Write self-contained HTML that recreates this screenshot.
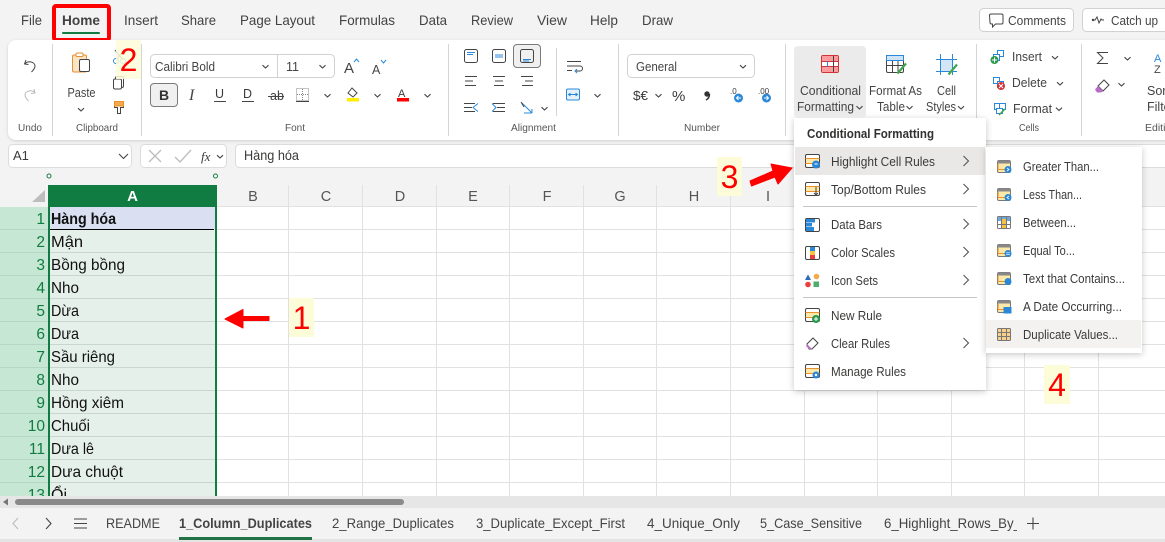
<!DOCTYPE html>
<html><head><meta charset="utf-8"><title>Excel</title>
<style>
html,body{margin:0;padding:0;background:#f3f3f3;overflow:hidden;width:1165px;height:542px}
svg{display:block}
text{font-family:"Liberation Sans","Noto Sans CJK SC",sans-serif;font-size:12px;fill:#3b3a39}
.tab{font-size:14px;fill:#424242}
.lb{font-size:10.5px;fill:#555}
.rb{font-size:12.5px;fill:#444}
.m{font-size:12.5px;fill:#3b3a39}
.c{font-size:16px;fill:#111}
.r{font-size:15.5px;fill:#107c41;text-anchor:end}
.h{font-size:14.5px;fill:#555;text-anchor:middle}
.s{font-size:14px;fill:#444}
.n{font-size:32px;fill:#ff0000;text-anchor:middle}
.ch{fill:none;stroke:#444;stroke-width:1.1}
.ln{stroke:#444;stroke-width:1;fill:none}
.bl{stroke:#2b88d8;stroke-width:1;fill:none}
</style></head><body>
<svg width="1165" height="542" viewBox="0 0 1165 542" xmlns="http://www.w3.org/2000/svg">
<defs>
<filter id="sh" x="-10%" y="-10%" width="120%" height="120%"><feDropShadow dx="0" dy="1.5" stdDeviation="3.5" flood-color="#000" flood-opacity=".22"/></filter>
<filter id="sr" x="-2%" y="-10%" width="104%" height="120%"><feDropShadow dx="0" dy="1" stdDeviation="1.5" flood-color="#000" flood-opacity=".15"/></filter>
<path id="dn" d="M-3-1.300 0 1.500 3-1.300" fill="none" stroke="#444" stroke-width="1.1"/>
<path id="rt" d="M-2.500-5 2.500 0-2.500 5" fill="none" stroke="#555" stroke-width="1.1"/>
<g id="ri">
 <rect x=".5" y=".5" width="14" height="13" rx="1.500" fill="#fff" stroke="#444"/>
 <rect x="1" y="4" width="13" height="6" fill="#fce9a9"/>
 <path d="M.5 4.500h14M.5 9.500h14" stroke="#e8912d" fill="none"/>
</g>
<g id="si">
 <rect x=".5" y=".5" width="13" height="12" rx="1.500" fill="#fce9a9" stroke="#777"/>
 <rect x=".5" y=".5" width="13" height="3" fill="#888"/>
 <path d="M.5 9.500h13" stroke="#e8912d"/>
 <path d="M1 4v5" stroke="#e8912d"/>
</g>
</defs>

<!-- base -->
<rect width="1165" height="542" fill="#f3f3f3"/>

<!-- sheet -->
<rect x="0" y="185" width="1165" height="312" fill="#fff"/>
<rect x="0" y="185" width="48" height="22" fill="#f3f3f3"/>
<rect x="217" y="185" width="948" height="22" fill="#f3f3f3"/>
<path d="M45 190V202H32Z" fill="#bdbdbd"/>
<rect x="0" y="207" width="48" height="290" fill="#c6e7d4"/>
<rect x="48" y="207" width="169" height="290" fill="#e6f0ea"/>
<rect x="50" y="207" width="165" height="22" fill="#dae0f2"/>
<g stroke="#e1e1e1" stroke-width="1">
<path d="M217 206.500H1165M217 229.500H1165M217 252.500H1165M217 275.500H1165M217 298.500H1165M217 321.500H1165M217 344.500H1165M217 367.500H1165M217 390.500H1165M217 413.500H1165M217 436.500H1165M217 459.500H1165M217 482.500H1165"/>
<path d="M288.500 185V497M362.500 185V497M436.500 185V497M509.500 185V497M583.500 185V497M656.500 185V497M730.500 185V497M804.500 185V497M877.500 185V497M951.500 185V497M1024.500 185V497M1098.500 185V497"/>
</g>
<g stroke="#c9d6ce" stroke-width="1">
<path d="M50 252.500H215M50 275.500H215M50 298.500H215M50 321.500H215M50 344.500H215M50 367.500H215M50 390.500H215M50 413.500H215M50 436.500H215M50 459.500H215M50 482.500H215"/>
</g>
<g stroke="#b4d6c2" stroke-width="1">
<path d="M0 229.500H48M0 252.500H48M0 275.500H48M0 298.500H48M0 321.500H48M0 344.500H48M0 367.500H48M0 390.500H48M0 413.500H48M0 436.500H48M0 459.500H48M0 482.500H48"/>
</g>
<path d="M50 229.500H214" stroke="#000" stroke-width="1"/>
<rect x="48" y="185" width="169" height="22" fill="#107c41"/>
<rect x="48" y="207" width="2" height="290" fill="#107c41"/>
<rect x="215" y="207" width="2" height="290" fill="#107c41"/>
<circle cx="49" cy="176" r="2" fill="#fff" stroke="#107c41"/>
<circle cx="215.500" cy="176" r="2" fill="#fff" stroke="#107c41"/>
<text x="132.500" y="201" style="font-size:15px;font-weight:bold;fill:#fff;text-anchor:middle">A</text>
<text class="h" x="253" y="201">B</text>
<text class="h" x="326" y="201">C</text>
<text class="h" x="400" y="201">D</text>
<text class="h" x="473" y="201">E</text>
<text class="h" x="547" y="201">F</text>
<text class="h" x="620" y="201">G</text>
<text class="h" x="694" y="201">H</text>
<text class="h" x="768" y="201">I</text>

<g>
<text class="r" x="45" y="224">1</text><text class="r" x="45" y="247">2</text><text class="r" x="45" y="270">3</text><text class="r" x="45" y="293">4</text><text class="r" x="45" y="316">5</text><text class="r" x="45" y="339">6</text><text class="r" x="45" y="362">7</text><text class="r" x="45" y="385">8</text><text class="r" x="45" y="408">9</text><text class="r" x="45" y="431">10</text><text class="r" x="45" y="454">11</text><text class="r" x="45" y="477">12</text>
<text class="c" x="51" y="224" textLength="65" lengthAdjust="spacingAndGlyphs" style="font-weight:bold">Hàng hóa</text>
<text class="c" x="51" y="247" textLength="32" lengthAdjust="spacingAndGlyphs">Mận</text>
<text class="c" x="51" y="270" textLength="74" lengthAdjust="spacingAndGlyphs">Bồng bồng</text>
<text class="c" x="51" y="293" textLength="28" lengthAdjust="spacingAndGlyphs">Nho</text>
<text class="c" x="51" y="316" textLength="28" lengthAdjust="spacingAndGlyphs">Dừa</text>
<text class="c" x="51" y="339" textLength="28" lengthAdjust="spacingAndGlyphs">Dưa</text>
<text class="c" x="51" y="362" textLength="64" lengthAdjust="spacingAndGlyphs">Sầu riêng</text>
<text class="c" x="51" y="385" textLength="28" lengthAdjust="spacingAndGlyphs">Nho</text>
<text class="c" x="51" y="408" textLength="73" lengthAdjust="spacingAndGlyphs">Hồng xiêm</text>
<text class="c" x="51" y="431" textLength="39" lengthAdjust="spacingAndGlyphs">Chuối</text>
<text class="c" x="51" y="454" textLength="43" lengthAdjust="spacingAndGlyphs">Dưa lê</text>
<text class="c" x="51" y="477" textLength="72" lengthAdjust="spacingAndGlyphs">Dưa chuột</text>
<text class="r" x="45" y="500">13</text>
<text class="c" x="51" y="500">Ổi</text>
</g>

<!-- scrollbar + tabs -->
<rect x="0" y="496" width="1165" height="12" fill="#e6e6e6"/>
<rect x="15" y="499" width="389" height="6" rx="3" fill="#8a8a8a"/>
<path d="M3 502 8 498.500V505.500Z" fill="#777"/>
<rect x="0" y="508" width="1165" height="31" fill="#f3f3f3"/>
<rect x="0" y="539" width="1165" height="3" fill="#e4e4e4"/>
<path d="M18 518 13 523.500 18 529" fill="none" stroke="#bbb" stroke-width="1.100"/>
<path d="M46 518 51 523.500 46 529" fill="none" stroke="#444" stroke-width="1.100"/>
<path d="M74 519H87M74 523.500H87M74 528H87" stroke="#444" stroke-width="1.100"/>
<text class="s" x="106" y="528" textLength="54" lengthAdjust="spacingAndGlyphs">README</text>
<text class="s" x="179" y="528" textLength="133" lengthAdjust="spacingAndGlyphs" style="font-weight:bold">1_Column_Duplicates</text>
<rect x="179" y="537" width="133" height="3" fill="#217346"/>
<text class="s" x="332" y="528" textLength="122" lengthAdjust="spacingAndGlyphs">2_Range_Duplicates</text>
<text class="s" x="476" y="528" textLength="149" lengthAdjust="spacingAndGlyphs">3_Duplicate_Except_First</text>
<text class="s" x="647" y="528" textLength="93" lengthAdjust="spacingAndGlyphs">4_Unique_Only</text>
<text class="s" x="760" y="528" textLength="102" lengthAdjust="spacingAndGlyphs">5_Case_Sensitive</text>
<text class="s" x="884" y="528" textLength="137" lengthAdjust="spacingAndGlyphs">6_Highlight_Rows_By_</text>
<rect x="1017" y="508" width="148" height="31" fill="#f3f3f3"/>
<path d="M1027 523.500H1039M1033 517.500V529.500" stroke="#444" stroke-width="1.100"/>

<!-- top tabs -->
<text class="tab" x="21" y="25" textLength="21" lengthAdjust="spacingAndGlyphs">File</text>
<text class="tab" x="62" y="25" textLength="38" lengthAdjust="spacingAndGlyphs" style="font-weight:bold">Home</text>
<rect x="62" y="32" width="38" height="2" rx="1" fill="#107c41"/>
<rect x="54" y="6" width="55" height="34" rx="2" fill="none" stroke="#ff0000" stroke-width="4"/>
<text class="tab" x="124" y="25" textLength="34" lengthAdjust="spacingAndGlyphs">Insert</text>
<text class="tab" x="181" y="25" textLength="35" lengthAdjust="spacingAndGlyphs">Share</text>
<text class="tab" x="240" y="25" textLength="75" lengthAdjust="spacingAndGlyphs">Page Layout</text>
<text class="tab" x="339" y="25" textLength="56" lengthAdjust="spacingAndGlyphs">Formulas</text>
<text class="tab" x="419" y="25" textLength="28" lengthAdjust="spacingAndGlyphs">Data</text>
<text class="tab" x="471" y="25" textLength="42" lengthAdjust="spacingAndGlyphs">Review</text>
<text class="tab" x="537" y="25" textLength="30" lengthAdjust="spacingAndGlyphs">View</text>
<text class="tab" x="590" y="25" textLength="28" lengthAdjust="spacingAndGlyphs">Help</text>
<text class="tab" x="642" y="25" textLength="31" lengthAdjust="spacingAndGlyphs">Draw</text>

<rect x="979.500" y="8.500" width="94" height="23" rx="4" fill="#fff" stroke="#d1d1d1"/>
<path d="M989.500 15.500a1.500 1.500 0 0 1 1.500-1.500h10.500a1.500 1.500 0 0 1 1.500 1.500v7a1.500 1.500 0 0 1-1.500 1.500h-6l-3 3v-3h-1a1.500 1.500 0 0 1-1.500-1.500z" class="ln"/>
<text x="1008" y="25" textLength="58" lengthAdjust="spacingAndGlyphs" class="rb">Comments</text>
<rect x="1082.500" y="8.500" width="90" height="23" rx="4" fill="#fff" stroke="#d1d1d1"/>
<path d="M1092 20h3l2-3 2 6 2-4 1 1h2" class="ln"/><circle cx="1093" cy="20" r="1.200" fill="#444"/>
<text x="1111" y="25" textLength="47" lengthAdjust="spacingAndGlyphs" class="rb">Catch up</text>

<!-- ribbon -->
<rect x="8" y="40" width="1170" height="100" rx="8" fill="#fff" filter="url(#sr)"/>
<g stroke="#d4d4d4" stroke-width="1">
<path d="M52.500 44V136M141.500 44V136M448.500 44V136M618.500 44V136M785.500 44V136M976.500 44V136M1081.500 44V136"/>
</g>
<text class="lb" x="18" y="131" textLength="24" lengthAdjust="spacingAndGlyphs">Undo</text>
<text class="lb" x="76" y="131" textLength="42" lengthAdjust="spacingAndGlyphs">Clipboard</text>
<text class="lb" x="285" y="131" textLength="20" lengthAdjust="spacingAndGlyphs">Font</text>
<text class="lb" x="511" y="131" textLength="45" lengthAdjust="spacingAndGlyphs">Alignment</text>
<text class="lb" x="684" y="131" textLength="36" lengthAdjust="spacingAndGlyphs">Number</text>
<text class="lb" x="1019" y="131" textLength="20" lengthAdjust="spacingAndGlyphs">Cells</text>
<text class="lb" x="1145" y="131">Editing</text>

<!-- undo redo -->
<path d="M26 60 l-1.500 4 4 .5 M25 64c3-4 10-2 10 2 0 2-1.500 4-3.500 6" class="ln"/>
<path d="M34 89l1 4-4 .5M35 93c-3-4-10-2-10 2 0 2 1.500 4 3.500 6" fill="none" stroke="#bbb"/>
<!-- clipboard -->
<rect x="72.500" y="55" width="14" height="17" rx="1.500" fill="#fbe3c6" stroke="#e8912d"/>
<rect x="76" y="53" width="7" height="3.500" rx="1" fill="#fff" stroke="#e8912d"/>
<rect x="79.500" y="59.500" width="10" height="12" rx="1.500" fill="#fff" stroke="#444"/>
<text class="rb" x="67.500" y="97" textLength="28" lengthAdjust="spacingAndGlyphs">Paste</text>
<use href="#dn" x="81" y="109.500"/>
<path d="M115 50 123 60M124 50 117 59" class="ln"/><circle cx="116" cy="61" r="2.500" fill="none" stroke="#2b88d8"/><circle cx="123" cy="61" r="2.500" fill="none" stroke="#2b88d8"/>
<rect x="115.500" y="76.500" width="8" height="11" rx="1.500" fill="#fff" stroke="#444"/><rect x="113.500" y="79" width="8" height="10" rx="1.500" fill="#fff" stroke="#444"/>
<path d="M114.500 101.500h9v6h-3v6h-3v-6h-3z" fill="#fff" stroke="#444"/><rect x="114.500" y="101.500" width="9" height="4.500" fill="#f5a94a" stroke="#e8912d"/>

<!-- font -->
<rect x="150.500" y="54.500" width="184" height="23" rx="4" fill="#fff" stroke="#d1d1d1"/>
<path d="M277.500 55V77" stroke="#d1d1d1"/>
<text class="rb" x="155" y="71" textLength="60" lengthAdjust="spacingAndGlyphs">Calibri Bold</text>
<use href="#dn" x="265.500" y="66.500"/>
<text class="rb" x="286" y="71" textLength="13">11</text>
<use href="#dn" x="322.500" y="66.500"/>
<text x="344" y="73" style="font-size:15px;fill:#444">A</text><path d="M354 62l2.500-3 2.500 3" class="bl"/>
<text x="372" y="74" style="font-size:12.500px;fill:#444">A</text><path d="M381 60l2.500 3 2.500-3" class="bl"/>
<rect x="150.500" y="83.500" width="27" height="23" rx="3.500" fill="#f0f0f0" stroke="#7a7a7a"/>
<text x="159" y="100" style="font-size:14px;font-weight:bold;fill:#333">B</text>
<text x="189" y="100" style="font-size:16px;font-style:italic;font-family:'Liberation Serif',serif;fill:#444">I</text>
<text x="215" y="98" style="font-size:12.500px">U</text><path d="M214 101.500H226" class="ln"/>
<text x="243" y="98" style="font-size:12.500px">D</text><path d="M242 101.500H254" class="ln"/>
<text x="270" y="100" style="font-size:12.500px">ab</text><path d="M268 96.500H284" class="ln"/>
<rect x="296.500" y="88.500" width="12" height="12" fill="none" stroke="#888" stroke-dasharray="1 1"/><path d="M302.500 89V100M297 94.500H308" stroke="#888" stroke-dasharray="1 1"/><path d="M296 101.500H309" class="ln"/>
<use href="#dn" x="327.500" y="95.500"/>
<path d="M348 93l4-5 5 5-4 4z" fill="#fff" stroke="#444"/><rect x="347" y="98" width="12" height="3.500" fill="#ffee00"/>
<use href="#dn" x="377.500" y="95.500"/>
<text x="398" y="97" style="font-size:11px">A</text><rect x="397" y="98" width="12" height="3.500" fill="#ff0000"/>
<use href="#dn" x="427.500" y="95.500"/>

<!-- alignment -->
<rect x="513.500" y="44.500" width="27" height="23" rx="3.500" fill="#f0f0f0" stroke="#7a7a7a"/>
<g fill="none" stroke="#444">
<rect x="464.500" y="49.500" width="13" height="13" rx="2"/><rect x="492.500" y="49.500" width="13" height="13" rx="2"/><rect x="520.500" y="49.500" width="13" height="13" rx="2"/>
</g>
<path d="M467 52.500H475M467 54.500H473M495 55H503M495 57H503M523 59.500H531M523 61H529" class="bl"/>
<path d="M465 76.500H477M465 81H473M465 85.500H476M493 76.500H505M495 81H503M494 85.500H504M521 76.500H533M525 81H533M522 85.500H533" class="ln"/>
<path d="M464 103.500H475M464 107.500H472M464 111.500H475M493 103.500H505M497 107.500H505M493 111.500H505" class="ln"/>
<path d="M478 103.500 473 107.500 478 111.500M492 103.500 496 107.500 492 111.500" class="bl"/>
<path d="M522 103l10 10M532 113v-4M532 113h-4M524 113h8" class="bl"/><path d="M521 102l3 5" class="ln"/>
<use href="#dn" x="544.500" y="108.500"/>
<path d="M556.500 48V116" stroke="#d4d4d4"/>
<path d="M567 61.500H581M567 66H580a2.500 2.500 0 0 1 0 5h-4M567 70.500H572" class="ln"/><path d="M577 69l-2 2 2 2" class="bl"/>
<rect x="566.500" y="89" width="13" height="11" rx="1.500" fill="#e5f1fb" stroke="#2b88d8"/><path d="M569 94.500H577M570.500 93l-2 1.500 2 1.500M575.500 93l2 1.500-2 1.500" class="bl"/>
<use href="#dn" x="597.500" y="95.500"/>

<!-- number -->
<rect x="627.500" y="54.500" width="127" height="23" rx="4" fill="#fff" stroke="#d1d1d1"/>
<text class="rb" x="636" y="71" textLength="41" lengthAdjust="spacingAndGlyphs">General</text>
<use href="#dn" x="743" y="66.500"/>
<text x="633" y="100" style="font-size:12.500px" textLength="15" lengthAdjust="spacingAndGlyphs">$€</text>
<use href="#dn" x="658.500" y="95.500"/>
<text x="672" y="101" style="font-size:15px">%</text>
<circle cx="707" cy="94" r="2.700" fill="#333"/><path d="M709.500 94c0 3-1.500 5-3.500 6" stroke="#333" stroke-width="1.500" fill="none"/>
<circle cx="738.500" cy="98" r="4.500" fill="#2b88d8"/><path d="M741 98H736.500M738.500 96l-2 2 2 2" stroke="#fff" fill="none"/><text x="730" y="94" style="font-size:8px">.0</text>
<circle cx="766.500" cy="98" r="4.500" fill="#2b88d8"/><path d="M764 98H768.500M766.500 96l2 2-2 2" stroke="#fff" fill="none"/><text x="758" y="94" style="font-size:8px">.00</text>

<!-- styles -->
<rect x="821.500" y="55.500" width="17" height="17" rx="1.500" fill="#fff" stroke="#d13438"/>
<text class="rb" x="869" y="95" textLength="53" lengthAdjust="spacingAndGlyphs">Format As</text>
<text class="rb" x="877" y="111" textLength="28" lengthAdjust="spacingAndGlyphs">Table</text>
<use href="#dn" x="909.500" y="107.500"/>
<rect x="886.500" y="55.500" width="17" height="17" rx="1.500" fill="#fff" stroke="#444"/>
<rect x="886.500" y="55.500" width="17" height="5" fill="#cfe4f7" stroke="#2b88d8"/>
<path d="M887 65.500H903M892.500 61V72M898 61V72" stroke="#444"/>
<path d="M897.500 73.500 906 63.500" stroke="#3fa64d" stroke-width="2.200" fill="none"/>
<rect x="940" y="59" width="13" height="13" fill="#d2e6f7"/>
<path d="M940.500 54V75M952.500 54V75M936 59.500H957M936 71.500H957" stroke="#2b88d8"/>
<path d="M948.500 74.500 957 64.500" stroke="#3fa64d" stroke-width="2.200" fill="none"/>
<text class="rb" x="937" y="95" textLength="19" lengthAdjust="spacingAndGlyphs">Cell</text>
<text class="rb" x="926" y="111" textLength="30" lengthAdjust="spacingAndGlyphs">Styles</text>
<use href="#dn" x="961" y="107.500"/>

<!-- cells -->
<rect x="997.500" y="50.500" width="6" height="6" fill="#fff" stroke="#2b88d8"/><rect x="993.500" y="54.500" width="6" height="6" fill="#fff" stroke="#2b88d8"/>
<circle cx="994.500" cy="60" r="4" fill="#2b9a4e"/><path d="M992 60H997M994.500 57.500V62.500" stroke="#fff"/>
<text class="rb" x="1012" y="61" textLength="30" lengthAdjust="spacingAndGlyphs">Insert</text>
<use href="#dn" x="1055" y="57.500"/>
<rect x="993.500" y="77.500" width="6" height="6" fill="#fff" stroke="#2b88d8"/><rect x="997.500" y="81.500" width="6" height="6" fill="#fff" stroke="#2b88d8"/>
<circle cx="1001" cy="86" r="4" fill="#d13438"/><path d="M999 84 1003 88M1003 84 999 88" stroke="#fff"/>
<text class="rb" x="1012" y="87" textLength="35" lengthAdjust="spacingAndGlyphs">Delete</text>
<use href="#dn" x="1060" y="83.500"/>
<rect x="994.500" y="103.500" width="6" height="6" fill="#fff" stroke="#2b88d8"/><rect x="999.500" y="103.500" width="6" height="6" fill="#fff" stroke="#2b88d8"/><rect x="996.500" y="108.500" width="6" height="5" fill="#fff" stroke="#2b88d8"/>
<path d="M999 115l2-2 4-4" stroke="#3fa64d" stroke-width="1.500" fill="none"/>
<text class="rb" x="1013" y="113" textLength="39" lengthAdjust="spacingAndGlyphs">Format</text>
<use href="#dn" x="1059" y="109"/>
<path d="M1108 52.500H1097.500L1103 58 1097.500 63.500H1108" class="ln"/>
<use href="#dn" x="1127.500" y="58.500"/>
<path d="M1098 86l6-6 5 5-6 6z" fill="#fff" stroke="#444"/><path d="M1098 86l5 5-2 1.500h-4l-2-3z" fill="#b86bc9"/>
<use href="#dn" x="1121.500" y="84.500"/>
<text x="1154" y="62" style="font-size:11px;fill:#2b88d8">A</text>
<text x="1154" y="73" style="font-size:11px;fill:#444">Z</text>
<text class="rb" x="1147" y="95">Sort &amp;</text>
<text class="rb" x="1147" y="111">Filter</text>

<!-- formula bar -->
<rect x="8.500" y="144.500" width="123" height="23" rx="4" fill="#fff" stroke="#dcdcdc"/>
<text x="13" y="160" style="font-size:13px">A1</text>
<path d="M119 154 123.500 158.500 128 154" class="ch"/>
<rect x="140.500" y="144.500" width="86" height="23" rx="4" fill="#fff" stroke="#dcdcdc"/>
<path d="M149 150 161 162M161 150 149 162" stroke="#bdbdbd" stroke-width="1.300"/>
<path d="M175 157 180 162 191 150" stroke="#bdbdbd" stroke-width="1.300" fill="none"/>
<text x="201" y="161" style="font-size:13px;font-style:italic;font-family:'Liberation Serif',serif">fx</text>
<use href="#dn" x="220" y="156.500"/>
<rect x="235.500" y="144.500" width="940" height="23" rx="4" fill="#fff" stroke="#dcdcdc"/>
<text x="244" y="160" style="font-size:13.500px" textLength="55" lengthAdjust="spacingAndGlyphs">Hàng hóa</text>

<!-- main menu -->
<rect x="794" y="118" width="192" height="272" fill="#fff" filter="url(#sh)"/>
<rect x="794" y="46" width="72" height="72" rx="4" fill="#ebebeb"/>
<rect x="821.500" y="55.500" width="17" height="17" rx="1.500" fill="#fff" stroke="#d13438"/>
<rect x="822" y="56" width="16" height="5" fill="#ff9a9a"/><rect x="822" y="67" width="16" height="5" fill="#ff9a9a"/>
<path d="M821.500 61.500H838.500M821.500 66.500H838.500" stroke="#d13438"/>
<path d="M827.500 61V67" stroke="#2b88d8"/><path d="M833.500 56V72" stroke="#444"/>
<text class="rb" x="800" y="95" textLength="61" lengthAdjust="spacingAndGlyphs">Conditional</text>
<text class="rb" x="797" y="111" textLength="57" lengthAdjust="spacingAndGlyphs">Formatting</text>
<use href="#dn" x="859.500" y="107.500"/>
<text x="807" y="138" textLength="127" lengthAdjust="spacingAndGlyphs" style="font-size:12.500px;font-weight:bold;fill:#323130">Conditional Formatting</text>
<rect x="795" y="147" width="190" height="28" fill="#eae8e6"/>

<use href="#ri" x="805" y="154"/><circle cx="816" cy="164.500" r="4" fill="#2b88d8"/><path d="M814.500 164H817.500" stroke="#fff"/>
<text class="m" x="831" y="166" textLength="104" lengthAdjust="spacingAndGlyphs">Highlight Cell Rules</text><use href="#rt" x="966" y="161"/>
<use href="#ri" x="805" y="182"/><path d="M816 187V195M814 193l2 2 2-2" class="ln"/>
<text class="m" x="831" y="194" textLength="95" lengthAdjust="spacingAndGlyphs">Top/Bottom Rules</text><use href="#rt" x="966" y="189"/>
<path d="M803 206.500H977" stroke="#c8c6c4"/>
<rect x="805.500" y="218.500" width="14" height="13" rx="1.500" fill="#fff" stroke="#444"/><rect x="806" y="219" width="9" height="3.500" fill="#2b88d8"/><rect x="806" y="223" width="6" height="3.500" fill="#2b88d8"/><rect x="806" y="227" width="8" height="4" fill="#2b88d8"/>
<text class="m" x="831" y="229" textLength="51" lengthAdjust="spacingAndGlyphs">Data Bars</text><use href="#rt" x="966" y="224"/>
<rect x="805.500" y="246.500" width="14" height="13" rx="1.500" fill="#fff" stroke="#444"/><rect x="810" y="247" width="5" height="4" fill="#2b88d8"/><rect x="810" y="251" width="5" height="4" fill="#f5c242"/><rect x="810" y="255" width="5" height="4" fill="#e8403a"/>
<text class="m" x="831" y="257" textLength="64" lengthAdjust="spacingAndGlyphs">Color Scales</text><use href="#rt" x="966" y="252"/>
<path d="M805 280l3-5.500 3 5.500z" fill="#2b6cb8"/><circle cx="816.500" cy="276.500" r="2.800" fill="#f5a94a"/><circle cx="808" cy="284.500" r="2.800" fill="#e8403a"/><rect x="813.500" y="281.500" width="5.500" height="5.500" fill="#4caf6a"/>
<text class="m" x="831" y="285" textLength="47" lengthAdjust="spacingAndGlyphs">Icon Sets</text><use href="#rt" x="966" y="280"/>
<path d="M803 297.500H977" stroke="#c8c6c4"/>
<use href="#ri" x="805" y="308"/><circle cx="816" cy="319" r="4" fill="#2b9a4e"/><path d="M814 319H818M816 317V321" stroke="#fff"/>
<text class="m" x="831" y="320" textLength="51" lengthAdjust="spacingAndGlyphs">New Rule</text>
<path d="M807 344l6-6 5 5-6 6h-3z" fill="#fff" stroke="#444"/><path d="M807 344l5 5h-3l-3-3z" fill="#b86bc9"/>
<text class="m" x="831" y="348" textLength="59" lengthAdjust="spacingAndGlyphs">Clear Rules</text><use href="#rt" x="966" y="343"/>
<use href="#ri" x="805" y="364"/><circle cx="816" cy="375" r="3.500" fill="#2b88d8"/><circle cx="816" cy="375" r="1.200" fill="#fff"/>
<text class="m" x="831" y="376" textLength="75" lengthAdjust="spacingAndGlyphs">Manage Rules</text>

<!-- submenu -->
<rect x="986" y="147" width="156" height="206" fill="#fff" filter="url(#sh)"/>
<rect x="986" y="320" width="155" height="28" fill="#f3f2f1"/>
<use href="#si" x="997" y="160"/><circle cx="1008" cy="169.500" r="3.500" fill="#2b88d8"/><path d="M1007 168l2 1.500-2 1.500" stroke="#fff" fill="none" stroke-width=".8"/>
<text class="m" x="1023" y="171" textLength="76" lengthAdjust="spacingAndGlyphs">Greater Than...</text>
<use href="#si" x="997" y="188"/><circle cx="1008" cy="197.500" r="3.500" fill="#2b88d8"/><path d="M1009 196l-2 1.500 2 1.500" stroke="#fff" fill="none" stroke-width=".8"/>
<text class="m" x="1023" y="199" textLength="59" lengthAdjust="spacingAndGlyphs">Less Than...</text>
<rect x="997.500" y="216.500" width="13" height="12" rx="1" fill="#fff" stroke="#777"/><rect x="998" y="217" width="12" height="4" fill="#6fa8dc"/><rect x="1002" y="219" width="4" height="9" fill="#f5c242"/><path d="M1001.500 217V228M1006.500 217V228M998 224.500H1010" stroke="#777"/>
<text class="m" x="1023" y="227" textLength="53" lengthAdjust="spacingAndGlyphs">Between...</text>
<use href="#si" x="997" y="244"/><circle cx="1008" cy="253.500" r="3.500" fill="#2b88d8"/><path d="M1006 252.800H1010M1006 254.300H1010" stroke="#fff" stroke-width=".7"/>
<text class="m" x="1023" y="255" textLength="52" lengthAdjust="spacingAndGlyphs">Equal To...</text>
<use href="#si" x="997" y="272"/><circle cx="1008" cy="281.500" r="3.500" fill="#2b88d8"/>
<text class="m" x="1023" y="283" textLength="102" lengthAdjust="spacingAndGlyphs">Text that Contains...</text>
<use href="#si" x="997" y="300"/><rect x="1003.500" y="307" width="8" height="6.500" fill="#2b88d8"/>
<text class="m" x="1023" y="311" textLength="99" lengthAdjust="spacingAndGlyphs">A Date Occurring...</text>
<rect x="997.500" y="328.500" width="13" height="12" rx="1" fill="#f7d08a" stroke="#777"/><path d="M1001.500 329V340M1006.500 329V340M998 332.500H1010M998 336.500H1010" stroke="#777"/>
<text class="m" x="1023" y="339" textLength="95" lengthAdjust="spacingAndGlyphs">Duplicate Values...</text>

<!-- annotations -->
<rect x="116" y="40" width="25" height="39" fill="#fdfcd8" fill-opacity=".85"/>
<text class="n" x="128.500" y="71">2</text>
<rect x="289" y="298" width="25" height="39" fill="#fdfcd8"/>
<text class="n" x="301.500" y="329">1</text>
<rect x="717" y="157" width="25" height="39" fill="#fdfcd8"/>
<text class="n" x="729.500" y="188">3</text>
<rect x="1044" y="365" width="26" height="39" fill="#fdfcd8"/>
<text class="n" x="1057" y="396">4</text>
<path d="M225 319 243 309.500 V316.500 H269 V320.500 H243 V328Z" fill="#ff0000" stroke="#ff0000" stroke-linejoin="round"/>
<path d="M792 168 771 164 773 171 750 181 751.500 186 775 177 778 184Z" fill="#ff0000" stroke="#ff0000" stroke-linejoin="round"/>
</svg>
</body></html>
